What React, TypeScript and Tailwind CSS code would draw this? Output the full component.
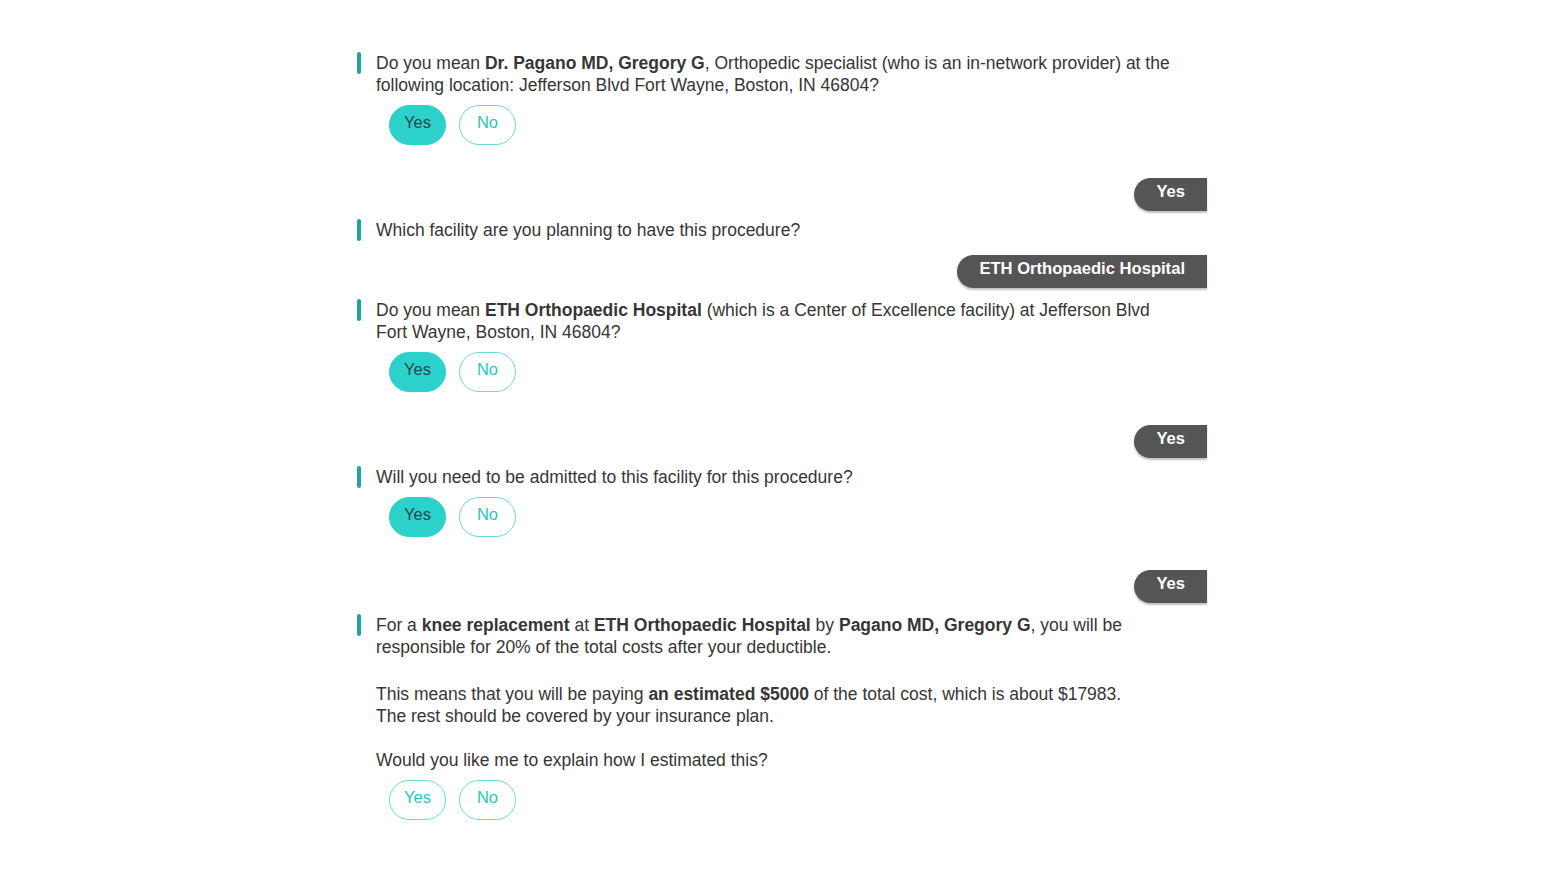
import React from "react";

const font = { fontFamily: '"Liberation Sans", Arial, Helvetica, sans-serif' };

function Bot({ children, className = "" }: { children: React.ReactNode; className?: string }) {
  return (
    <div className={`flex ${className}`}>
      <div className="w-[4px] h-[22px] shrink-0 rounded-full bg-[#1ea69e]" />
      <div className="ml-[15px] w-[800px] text-[17.5px] leading-[22px] text-[#363636]">{children}</div>
    </div>
  );
}

function Buttons({ filled, className = "" }: { filled: boolean; className?: string }) {
  return (
    <div className={`flex gap-[13px] ml-[32px] ${className}`}>
      <div
        className={`w-[57px] h-[40px] rounded-full flex items-center justify-center pb-[5px] text-[16.5px] ${
          filled
            ? "bg-[#2dd1cc] text-[#234848] border border-[#2dd1cc]"
            : "border border-[#6bdad6] text-[#27c7c2] bg-white"
        }`}
      >
        Yes
      </div>
      <div className="w-[57px] h-[40px] rounded-full flex items-center justify-center pb-[5px] text-[16.5px] border border-[#6bdad6] text-[#27c7c2] bg-white">
        No
      </div>
    </div>
  );
}

function User({ children, className = "" }: { children: React.ReactNode; className?: string }) {
  return (
    <div className={`flex justify-end ${className}`}>
      <div className="h-[33px] px-[22px] pb-[5px] flex items-center bg-[#555555] text-white font-bold text-[16.6px] rounded-l-full rounded-tr-[14px] shadow-[0_2px_2px_rgba(0,0,0,0.25)]">
        {children}
      </div>
    </div>
  );
}

export default function App() {
  return (
    <div className="min-h-[878px] w-full bg-white" style={font}>
      <div className="w-[850px] ml-[357px] pt-[52px] flex flex-col">
        <Bot>
          Do you mean <b>Dr. Pagano MD, Gregory G</b>, Orthopedic specialist (who is an in-network provider) at the
          following location: Jefferson Blvd Fort Wayne, Boston, IN 46804?
        </Bot>
        <Buttons filled className="mt-[9px]" />
        <User className="mt-[33px]">Yes</User>
        <Bot className="mt-[8px]">Which facility are you planning to have this procedure?</Bot>
        <User className="mt-[14px]">ETH Orthopaedic Hospital</User>
        <Bot className="mt-[11px]">
          Do you mean <b>ETH Orthopaedic Hospital</b> (which is a Center of Excellence facility) at Jefferson Blvd Fort
          Wayne, Boston, IN 46804?
        </Bot>
        <Buttons filled className="mt-[9px]" />
        <User className="mt-[33px]">Yes</User>
        <Bot className="mt-[8px]">Will you need to be admitted to this facility for this procedure?</Bot>
        <Buttons filled className="mt-[9px]" />
        <User className="mt-[33px]">Yes</User>
        <Bot className="mt-[11px]">
          <p>
            For a <b>knee replacement</b> at <b>ETH Orthopaedic Hospital</b> by <b>Pagano MD, Gregory G</b>, you will be
            responsible for 20% of the total costs after your deductible.
          </p>
          <p className="mt-[25px]">
            This means that you will be paying <b>an estimated $5000</b> of the total cost, which is about $17983.
            <br />
            The rest should be covered by your insurance plan.
          </p>
          <p className="mt-[22px]">Would you like me to explain how I estimated this?</p>
        </Bot>
        <Buttons filled={false} className="mt-[9px]" />
      </div>
    </div>
  );
}
